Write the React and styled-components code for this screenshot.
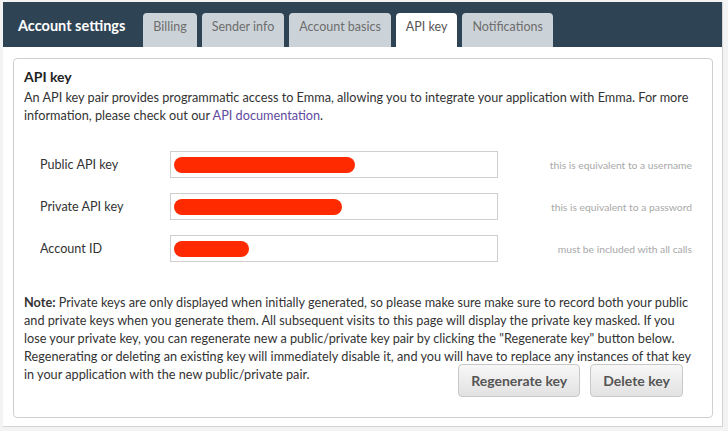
import styled, { createGlobalStyle } from "styled-components";

const GlobalStyle = createGlobalStyle`
    body {
        margin: 0;
        background: #f3f3f3;
        font-family: Lato, "Open Sans", sans-serif;
        color: #333;
    }
`;

const TABS = ["Billing", "Sender info", "Account basics", "API key", "Notifications"];

const KEYS = [
    { label: "Public API key", redacted: 181, hint: "this is equivalent to a username" },
    { label: "Private API key", redacted: 168, hint: "this is equivalent to a password" },
    { label: "Account ID", redacted: 75, hint: "must be included with all calls" },
];

export default function App() {
    return (
        <>
            <GlobalStyle />
            <Page>
                <Settings>
                    <Header>
                        <HeaderTitle>Account settings</HeaderTitle>
                        <TabList>
                            {TABS.map((tab) => (
                                <Tab key={tab} $active={tab === "API key"}>{tab}</Tab>
                            ))}
                        </TabList>
                    </Header>
                    <Body>
                        <Panel>
                            <PanelTitle>API key</PanelTitle>
                            <Text>
                                An API key pair provides programmatic access to Emma, allowing you to integrate your application with Emma. For more information, please check out our <Link href="#">API documentation</Link>.
                            </Text>
                            <KeyList>
                                {KEYS.map((item) => (
                                    <KeyRow key={item.label}>
                                        <KeyLabel>{item.label}</KeyLabel>
                                        <KeyField>
                                            <Redacted style={{ width: item.redacted }} />
                                        </KeyField>
                                        <KeyHint>{item.hint}</KeyHint>
                                    </KeyRow>
                                ))}
                            </KeyList>
                            <Note>
                                <strong>Note:</strong> Private keys are only displayed when initially generated, so please make sure make sure to record both your public and private keys when you generate them. All subsequent visits to this page will display the private key masked. If you lose your private key, you can regenerate new a public/private key pair by clicking the "Regenerate key" button below. Regenerating or deleting an existing key will immediately disable it, and you will have to replace any instances of that key in your application with the new public/private pair.
                            </Note>
                            <Actions>
                                <Button>Regenerate key</Button>
                                <Button>Delete key</Button>
                            </Actions>
                        </Panel>
                    </Body>
                </Settings>
            </Page>
        </>
    );
}

const Page = styled.div`
    padding: 2px 4px 4px 3px;
`;

const Settings = styled.div`
    width: 720px;
    height: 425px;
    box-sizing: border-box;
    background: #fff;
    border-right: 1px solid #d4d4d4;
    border-bottom: 1px solid #d4d4d4;
    display: flex;
    flex-direction: column;
`;

const Header = styled.div`
    height: 45px;
    background: #2e4354;
    display: flex;
    align-items: flex-end;
    padding-left: 15px;
`;

const HeaderTitle = styled.h1`
    margin: 0 18px 12px 0;
    font-size: 14.5px;
    font-weight: 700;
    color: #fff;
    line-height: 18px;
`;

const TabList = styled.div`
    display: flex;
    gap: 5px;
`;

const Tab = styled.div`
    height: 34px;
    padding: 0 10px 8px;
    box-sizing: border-box;
    border-radius: 4px 4px 0 0;
    background: ${({ $active }) => ($active ? "#fff" : "#ccd3d8")};
    color: ${({ $active }) => ($active ? "#555" : "#6d6d6d")};
    font-size: 12.5px;
    display: flex;
    align-items: center;
`;

const Body = styled.div`
    flex: 1;
    padding: 11px 9px 8px 10px;
    display: flex;
`;

const Panel = styled.div`
    flex: 1;
    border: 1px solid #cfcfcf;
    border-radius: 4px;
    padding: 9px 10px 20px 10px;
`;

const PanelTitle = styled.h2`
    margin: 0 0 2px;
    font-size: 14px;
    font-weight: 700;
    line-height: 18px;
    color: #222;
`;

const Text = styled.p`
    margin: 0;
    font-size: 12.7px;
    line-height: 18px;
`;

const Link = styled.a`
    color: #5e4a9e;
    text-decoration: none;
`;

const KeyList = styled.div`
    margin-top: 27px;
    display: flex;
    flex-direction: column;
    gap: 15px;
`;

const KeyRow = styled.div`
    display: flex;
    align-items: center;
    padding-left: 16px;
    padding-right: 10px;
`;

const KeyLabel = styled.div`
    width: 130px;
    font-size: 12.6px;
`;

const KeyField = styled.div`
    width: 328px;
    height: 27px;
    box-sizing: border-box;
    border: 1px solid #cfcfcf;
    display: flex;
    align-items: center;
    padding-left: 3px;
`;

const Redacted = styled.span`
    height: 16px;
    border-radius: 8px;
    background: #ff2a00;
`;

const KeyHint = styled.div`
    flex: 1;
    text-align: right;
    font-size: 10.3px;
    color: #a8a8a8;
`;

const Note = styled(Text)`
    margin-top: 31px;
    padding-right: 10px;
`;

const Actions = styled.div`
    margin-top: -19px;
    display: flex;
    justify-content: flex-end;
    gap: 10px;
    padding-right: 19px;
`;

const Button = styled.button`
    height: 33px;
    padding: 0 12px;
    border: 1px solid #c8c8c8;
    border-radius: 4px;
    background: linear-gradient(#f7f7f7, #e2e2e2);
    font-family: Lato, "Open Sans", sans-serif;
    font-size: 14px;
    font-weight: 700;
    color: #555;
`;
